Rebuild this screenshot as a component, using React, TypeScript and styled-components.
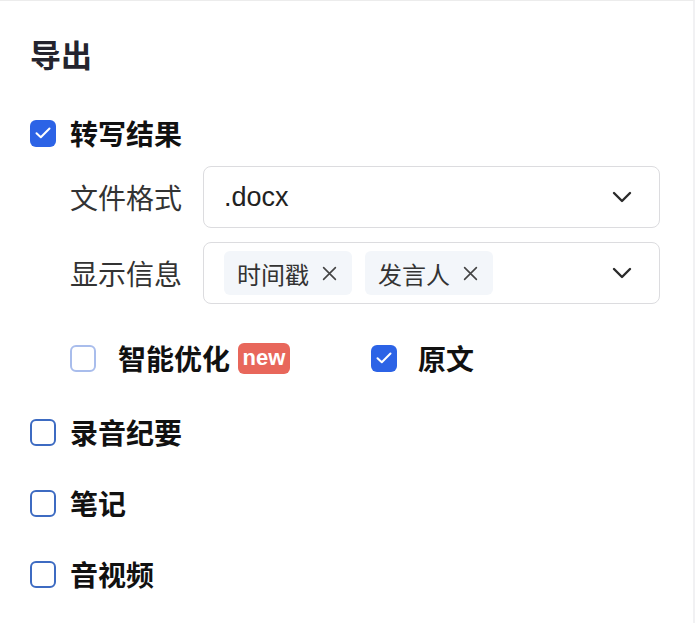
import { PropsWithChildren } from 'react';
import styled, { createGlobalStyle } from 'styled-components';

const GlobalStyle = createGlobalStyle`
  html, body {
    margin: 0;
    padding: 0;
    background: #ffffff;
  }
  body {
    font-family: "Liberation Sans", "Noto Sans CJK SC", sans-serif;
    color: #222;
  }
`;

const Panel = styled.div`
  box-sizing: border-box;
  width: 695px;
  min-height: 623px;
  border-top: 1px solid #ececec;
  border-right: 2px solid #f1f1f3;
  padding: 36px 33px 0 30px;
  display: flex;
  flex-direction: column;
`;

const Title = styled.h1`
  margin: 0;
  font-size: 31px;
  line-height: 40px;
  font-weight: 600;
  color: #24242e;
`;

const Section = styled.div`
  display: flex;
  flex-direction: column;
  margin-top: 36px;
`;

const Row = styled.label<{ $gap?: number }>`
  display: flex;
  align-items: center;
  gap: ${(p) => p.$gap ?? 14}px;
  height: 40px;
  cursor: pointer;
`;

const Label = styled.span`
  font-size: 28px;
  font-weight: 700;
  color: #111;
`;

const Box = styled.span<{ $checked?: boolean; $muted?: boolean }>`
  box-sizing: border-box;
  width: 26px;
  height: 27px;
  border-radius: 6px;
  display: inline-flex;
  align-items: center;
  justify-content: center;
  flex-shrink: 0;
  background: ${(p) => (p.$checked ? '#2c63e6' : '#fff')};
  border: ${(p) =>
    p.$checked ? 'none' : `2px solid ${p.$muted ? '#a9bdec' : '#3d6bc2'}`};
`;

const Fields = styled.div`
  display: flex;
  flex-direction: column;
  gap: 14px;
  margin: 13px 0 0 40px;
`;

const Field = styled.div`
  display: flex;
  align-items: center;
  gap: 21px;
`;

const FieldLabel = styled.span`
  font-size: 28px;
  color: #333;
  width: 112px;
  white-space: nowrap;
`;

const Select = styled.div`
  flex: 1;
  box-sizing: border-box;
  height: 62px;
  border: 1px solid #dcdcdf;
  border-radius: 8px;
  display: flex;
  align-items: center;
  padding: 0 27px 0 20px;
  gap: 13px;
`;

const Value = styled.span`
  flex: 1;
  font-size: 27px;
  color: #222;
`;

const Tags = styled.div`
  flex: 1;
  display: flex;
  gap: 13px;
`;

const Tag = styled.span`
  display: inline-flex;
  align-items: center;
  gap: 13px;
  height: 44px;
  padding: 0 15px 0 13px;
  border-radius: 6px;
  background: #f3f6fa;
  font-size: 24px;
  color: #333;
`;

const Options = styled.div`
  display: flex;
  align-items: center;
  gap: 81px;
  margin: 34px 0 0 40px;
`;

const Badge = styled.span`
  margin-left: -14px;
  display: inline-flex;
  align-items: center;
  justify-content: center;
  width: 52px;
  height: 31px;
  border-radius: 6px;
  background: #e8675b;
  color: #fff;
  font-size: 22px;
  font-weight: 700;
`;

const Others = styled.div`
  display: flex;
  flex-direction: column;
  gap: 31px;
  margin-top: 34px;
`;

const Check = () => (
  <svg width="16" height="12" viewBox="0 0 16 12" fill="none">
    <path d="M1.5 6.2 L5.8 10.3 L14.5 1.5" stroke="#fff" strokeWidth="2" strokeLinecap="round" strokeLinejoin="round" />
  </svg>
);

const Chevron = () => (
  <svg width="20" height="12" viewBox="0 0 20 12" fill="none">
    <path d="M2 2 L10 10 L18 2" stroke="#2a2a2a" strokeWidth="2.4" strokeLinecap="round" strokeLinejoin="round" />
  </svg>
);

const Close = () => (
  <svg width="15" height="15" viewBox="0 0 14 14" fill="none">
    <path d="M1.5 1.5 L12.5 12.5 M12.5 1.5 L1.5 12.5" stroke="#444" strokeWidth="1.5" strokeLinecap="round" />
  </svg>
);

interface CheckItemProps extends PropsWithChildren {
  checked?: boolean;
  muted?: boolean;
  gap?: number;
}

const CheckItem = ({ checked, muted, gap, children }: CheckItemProps) => (
  <Row $gap={gap}>
    <Box $checked={checked} $muted={muted}>{checked && <Check />}</Box>
    {children}
  </Row>
);

export default function App() {
  return (
    <>
      <GlobalStyle />
      <Panel>
        <Title>导出</Title>
        <Section>
          <CheckItem checked>
            <Label>转写结果</Label>
          </CheckItem>
          <Fields>
            <Field>
              <FieldLabel>文件格式</FieldLabel>
              <Select>
                <Value>.docx</Value>
                <Chevron />
              </Select>
            </Field>
            <Field>
              <FieldLabel>显示信息</FieldLabel>
              <Select>
                <Tags>
                  <Tag>时间戳<Close /></Tag>
                  <Tag>发言人<Close /></Tag>
                </Tags>
                <Chevron />
              </Select>
            </Field>
          </Fields>
          <Options>
            <CheckItem muted gap={22}>
              <Label>智能优化</Label>
              <Badge>new</Badge>
            </CheckItem>
            <CheckItem checked gap={21}>
              <Label>原文</Label>
            </CheckItem>
          </Options>
        </Section>
        <Others>
          <CheckItem><Label>录音纪要</Label></CheckItem>
          <CheckItem><Label>笔记</Label></CheckItem>
          <CheckItem><Label>音视频</Label></CheckItem>
        </Others>
      </Panel>
    </>
  );
}
